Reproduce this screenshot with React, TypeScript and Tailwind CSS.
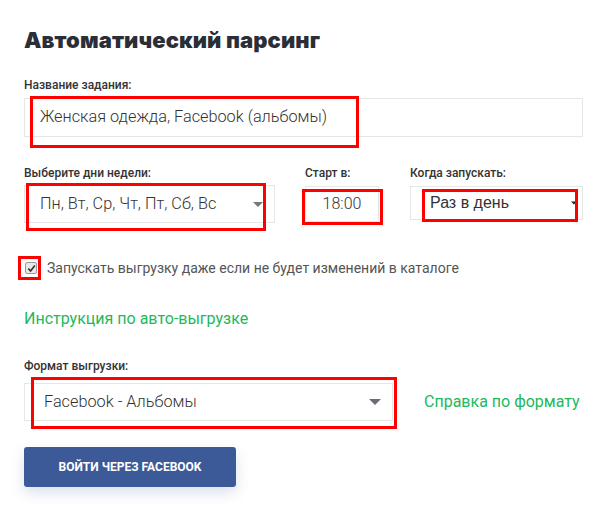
import React from 'react';

const roboto = { fontFamily: 'Roboto, "Liberation Sans", sans-serif' };

function Caret({ className }: { className: string }) {
  return (
    <svg className={className} viewBox="0 0 12 6" aria-hidden="true">
      <path d="M0 0h12L6 6z" fill="currentColor" />
    </svg>
  );
}

function FieldLabel({ children }: { children: React.ReactNode }) {
  return <div className="text-[12px] leading-[14px] font-medium text-[#333]">{children}</div>;
}

export default function App() {
  return (
    <div
      className="relative w-[609px] h-[514px] bg-white pl-[24px] pr-[26px] pt-[26px] overflow-hidden"
      style={roboto}
    >
      <h1
        className="text-[22px] leading-[28px] font-black tracking-[0.1px] text-[#2b2e37]"
        style={{ fontFamily: 'Inter, "Noto Sans", sans-serif' }}
      >
        Автоматический парсинг
      </h1>

      <div className="mt-[24px]">
        <FieldLabel>Название задания:</FieldLabel>
        <div className="mt-[6px] h-[39px] border border-[#e6e6e6] flex items-center pl-[15px] text-[16.3px] font-light text-[#333]">
          Женская одежда, Facebook (альбомы)
        </div>
      </div>

      <div className="mt-[29px] flex">
        <div className="w-[251px]">
          <FieldLabel>Выберите дни недели:</FieldLabel>
          <div className="mt-[5px] h-[38px] border border-[#e6e6e6] flex items-center justify-between pl-[15px] pr-[11px] text-[16.3px] font-light text-[#333]">
            <span>Пн, Вт, Ср, Чт, Пт, Сб, Вс</span>
            <Caret className="w-[10px] h-[5px] text-[#777]" />
          </div>
        </div>
        <div className="ml-[30px] w-[74px]">
          <FieldLabel>Старт в:</FieldLabel>
          <div className="mt-[6px] h-[36px] border border-[#e6e6e6] flex items-center justify-center text-[16px] font-light text-[#333]">
            18:00
          </div>
        </div>
        <div className="ml-[31px] flex-1">
          <FieldLabel>Когда запускать:</FieldLabel>
          <div
            className="mt-[6px] h-[34px] border border-[#e6e6e6] flex items-center justify-between pl-[19px] pr-[5px] text-[16px] text-[#333]"
            style={{ fontFamily: '"Liberation Sans", Arial, sans-serif' }}
          >
            <span>Раз в день</span>
            <Caret className="w-[6px] h-[4px] text-[#222]" />
          </div>
        </div>
      </div>

      <label className="mt-[35px] flex items-center h-[20px] text-[14px] text-[#555]">
        <span className="w-[12px] h-[12px] ml-px rounded-[2px] border border-[#9a9a9a] bg-[#e8e8e8] flex items-center justify-center">
          <svg viewBox="0 0 10 10" className="w-[9px] h-[9px]" aria-hidden="true">
            <path d="M1.5 5.2 4 7.8 8.7 1.8" fill="none" stroke="#333" strokeWidth="1.8" />
          </svg>
        </span>
        <span className="ml-[10px]">Запускать выгрузку даже если не будет изменений в каталоге</span>
      </label>

      <a className="mt-[31px] block h-[20px] leading-[20px] text-[16px] text-[#22b85c]">
        Инструкция по авто-выгрузке
      </a>

      <div className="mt-[30px]">
        <FieldLabel>Формат выгрузки:</FieldLabel>
        <div className="mt-[10px] flex items-center">
          <div className="w-[369px] h-[38px] border border-[#e6e6e6] flex items-center justify-between pl-[19px] pr-[11px] text-[16.3px] font-light text-[#333]">
            <span>Facebook - Альбомы</span>
            <Caret className="w-[12px] h-[6px] text-[#6b6e76]" />
          </div>
          <a className="ml-[31px] text-[16px] text-[#22b85c]">Справка по формату</a>
        </div>
      </div>

      <button className="mt-[26px] w-[212px] h-[40px] rounded-[3px] bg-[#3d5a98] text-white text-[12px] font-bold uppercase shadow-[0_6px_14px_rgba(61,90,152,0.18)]">
        Войти через Facebook
      </button>

      <div className="absolute left-[30px] top-[96px] w-[329px] h-[52px] border-[3px] border-[#f00] pointer-events-none" />
      <div className="absolute left-[26px] top-[183px] w-[240px] h-[48px] border-[3px] border-[#f00] pointer-events-none" />
      <div className="absolute left-[302px] top-[189px] w-[81px] h-[36px] border-[3px] border-[#f00] pointer-events-none" />
      <div className="absolute left-[422px] top-[189px] w-[156px] h-[33px] border-[3px] border-[#f00] pointer-events-none" />
      <div className="absolute left-[18px] top-[256px] w-[23px] h-[24px] border-[3px] border-[#f00] pointer-events-none" />
      <div className="absolute left-[31px] top-[377px] w-[366px] h-[52px] border-[3px] border-[#f00] pointer-events-none" />
    </div>
  );
}
